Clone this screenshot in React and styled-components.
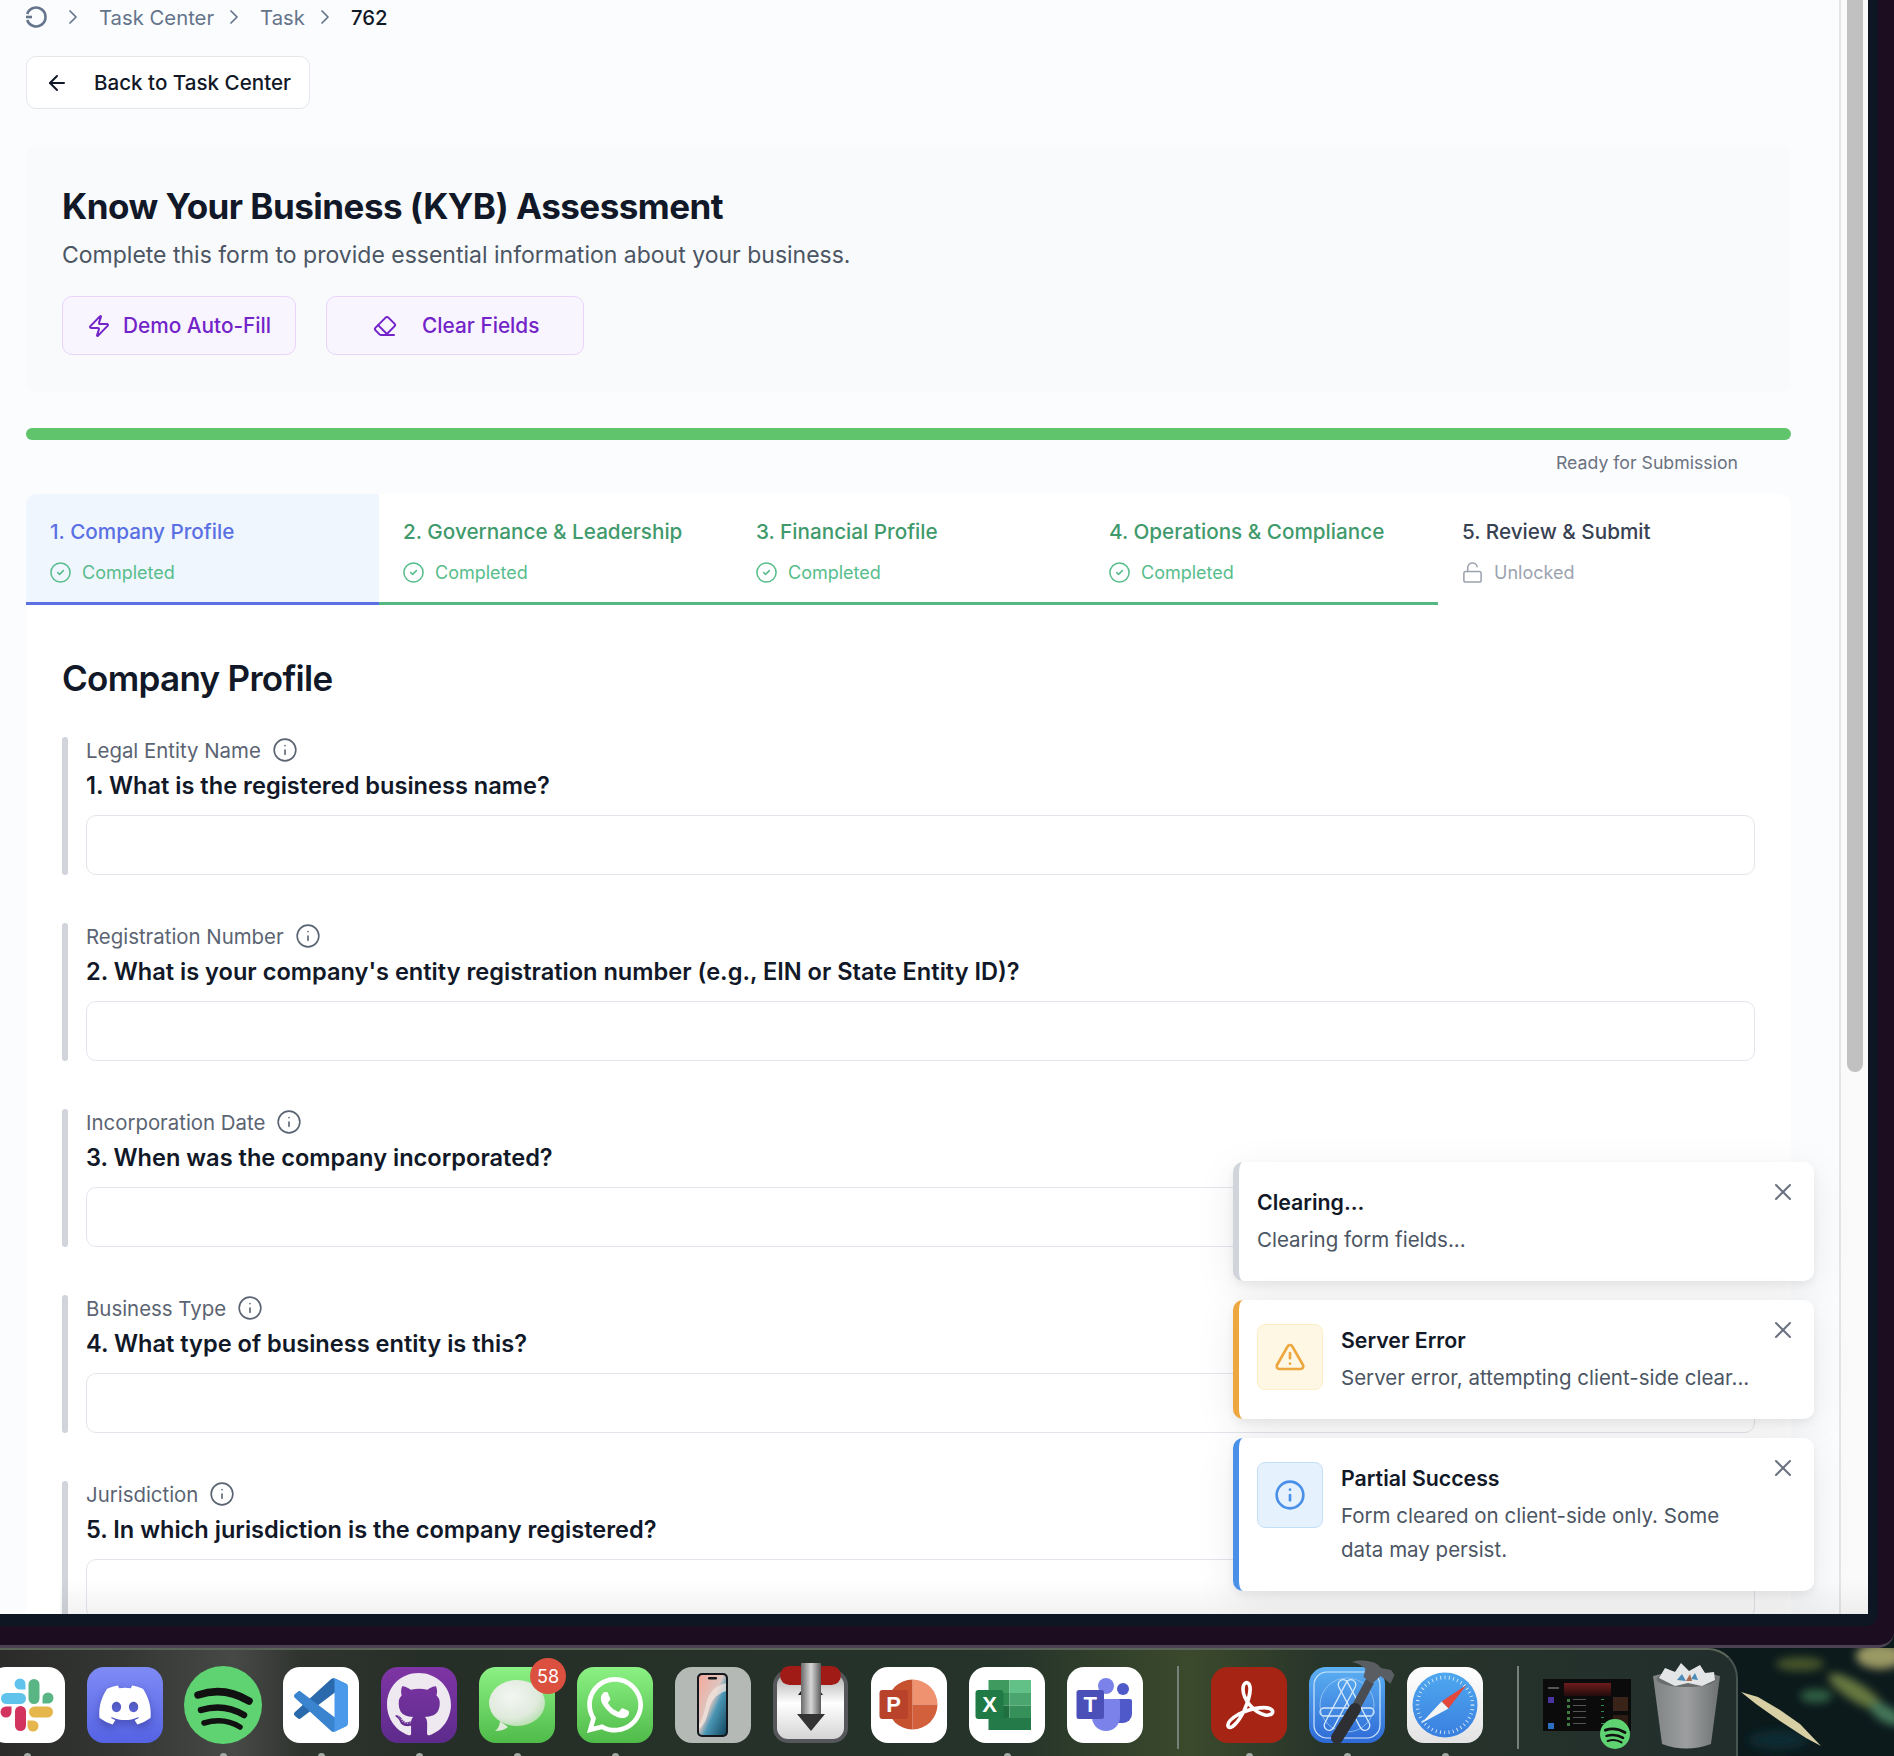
import React from 'react';
import styled, { createGlobalStyle } from 'styled-components';
import { ArrowLeft, ChevronRight, CircleCheck, Eraser, Info, LockOpen, TriangleAlert, X, Zap } from 'lucide-react';
import { FaDiscord, FaGithub, FaWhatsapp } from 'react-icons/fa';

const GlobalStyle = createGlobalStyle`
  html, body {
    margin: 0;
    padding: 0;
    background: #0c1a1c;
  }
  * {
    box-sizing: border-box;
  }
  body {
    font-family: 'Inter', 'Liberation Sans', sans-serif;
  }
`;

const Screen = styled.div`
  width: 1894px;
  height: 1756px;
  overflow: hidden;
  display: flex;
  flex-direction: column;
  background: #0c1a1c;
`;

/* window chrome */
const OuterFrame = styled.div`
  height: 1648px;
  flex-shrink: 0;
  background: #1c0e20;
  border-bottom: 3px solid #4c4152;
  border-bottom-right-radius: 16px;
  padding: 0 16px 19px 0;
`;

const InnerFrame = styled.div`
  height: 100%;
  background: #0f1623;
  border-bottom-right-radius: 12px;
  padding: 0 10px 12px 0;
`;

const Page = styled.div`
  position: relative;
  height: 100%;
  display: flex;
  overflow: hidden;
  background: #fbfcfe;
`;

const Main = styled.main`
  flex: 1;
  min-width: 0;
  padding: 0 48px 0 26px;
  overflow: hidden;
`;

const ScrollTrack = styled.div`
  width: 29px;
  flex-shrink: 0;
  background: #fafafa;
  border-left: 2px solid #e5e5e5;
  padding-left: 6px;
`;

const ScrollThumb = styled.div`
  width: 16px;
  height: 1072px;
  background: #c1c1c1;
  border-radius: 0 0 8px 8px;
`;

const BottomFade = styled.div`
  position: absolute;
  left: 60px;
  right: 0;
  bottom: 0;
  height: 34px;
  background: linear-gradient(to bottom, rgba(0, 0, 0, 0), rgba(0, 0, 0, 0.05));
  pointer-events: none;
`;

/* breadcrumb */
const Breadcrumb = styled.nav`
  height: 34px;
  display: flex;
  align-items: center;
  font-size: 20.3px;
  color: #64748b;
`;

const CrumbHome = styled.svg`
  width: 22px;
  height: 22px;
  margin: 0 6px 0 -1px;
  flex-shrink: 0;
`;

const CrumbSep = styled(ChevronRight)`
  margin: 0 14px 0 8px;
  flex-shrink: 0;
`;

const CrumbCurrent = styled.span`
  color: #111827;
  font-weight: 500;
`;

const BackButton = styled.button`
  display: flex;
  align-items: center;
  gap: 25px;
  width: 284px;
  height: 53px;
  margin-top: 22px;
  padding: 0 0 0 18px;
  background: #ffffff;
  border: 1px solid #e5e7eb;
  border-radius: 10px;
  font-family: inherit;
  font-size: 20.6px;
  font-weight: 500;
  color: #111827;
`;

/* header */
const HeaderPanel = styled.section`
  margin-top: 36px;
  height: 247px;
  padding: 36px;
  background: #f9fafc;
  border-radius: 10px;
`;

const Title = styled.h1`
  margin: 0;
  font-size: 35px;
  line-height: 50px;
  font-weight: 700;
  letter-spacing: -0.52px;
  color: #111827;
`;

const Subtitle = styled.p`
  margin: 7px 0 0;
  font-size: 23px;
  line-height: 34px;
  color: #4b5563;
`;

const ActionRow = styled.div`
  display: flex;
  gap: 30px;
  margin-top: 24px;
`;

const ActionButton = styled.button`
  display: flex;
  align-items: center;
  gap: ${(p) => p.$gap}px;
  height: 59px;
  padding: 0 ${(p) => p.$right}px 0 ${(p) => p.$left}px;
  background: #f8f5fe;
  border: 1px solid #e9d5fb;
  border-radius: 10px;
  font-family: inherit;
  font-size: 20.8px;
  font-weight: 500;
  color: #7324c9;
`;

/* progress */
const ProgressTrack = styled.div`
  margin-top: 36px;
  height: 12px;
  border-radius: 6px;
  background: #5fc46c;
`;

const ProgressLabel = styled.div`
  height: 54px;
  padding: 10px 53px 0 0;
  text-align: right;
  font-size: 17.7px;
  line-height: 26px;
  color: #6b7280;
`;

/* tabs */
const FormCard = styled.div`
  background: #ffffff;
  border-radius: 10px 10px 0 0;
`;

const TabRow = styled.div`
  display: grid;
  grid-template-columns: repeat(5, 1fr);
`;

const Tab = styled.div`
  height: 111px;
  padding: 24px 24px 0;
  background: ${(p) => (p.$active ? '#eff6fe' : 'transparent')};
  border-bottom: 3px solid ${(p) => (p.$active ? '#5a70e3' : p.$done ? '#54b884' : 'transparent')};
  border-top-left-radius: ${(p) => (p.$active ? '10px' : '0')};
`;

const TabLabel = styled.div`
  font-size: 20.7px;
  line-height: 28px;
  font-weight: 500;
  color: ${(p) => (p.$active ? '#5a70e3' : p.$done ? '#3f9a6c' : '#374151')};
`;

const TabStatus = styled.div`
  display: flex;
  align-items: center;
  gap: 10px;
  margin-top: 12px;
  margin-left: -1px;
  height: 28px;
  font-size: 18px;
  color: ${(p) => (p.$done ? '#57bd8c' : '#9ca3af')};
`;

/* questions */
const FormBody = styled.div`
  padding: 51px 36px 0;
`;

const SectionTitle = styled.h2`
  margin: 0 0 37px;
  font-size: 35px;
  line-height: 44px;
  font-weight: 600;
  letter-spacing: -0.7px;
  color: #111827;
`;

const QuestionBlock = styled.div`
  display: flex;
  gap: 18px;
  height: 138px;
  margin-bottom: 48px;
`;

const QuestionBar = styled.div`
  width: 6px;
  flex-shrink: 0;
  background: #d1d5db;
  border-radius: 3px;
`;

const QuestionBody = styled.div`
  flex: 1;
  min-width: 0;
`;

const FieldLabel = styled.div`
  display: flex;
  align-items: center;
  gap: 11px;
  height: 26px;
  font-size: 20.4px;
  color: #5b6472;
`;

const QuestionText = styled.div`
  margin-top: 6px;
  font-size: 23.6px;
  line-height: 34px;
  font-weight: 600;
  color: #111827;
`;

const TextField = styled.div`
  height: 60px;
  margin-top: 12px;
  background: #ffffff;
  border: 1px solid #e2e6ec;
  border-radius: 10px;
`;

/* toasts */
const ToastStack = styled.div`
  position: absolute;
  right: 54px;
  bottom: 23px;
  width: 581px;
  display: flex;
  flex-direction: column;
  gap: 19px;
`;

const ToastCard = styled.div`
  position: relative;
  display: flex;
  gap: 18px;
  padding: 24px 54px 24px 18px;
  background: #ffffff;
  border-left: 6px solid ${(p) => p.$accent};
  border-radius: 10px;
  box-shadow: 0 4px 8px rgba(0, 0, 0, 0.06), 0 10px 40px rgba(0, 0, 0, 0.08);
`;

const ToastIconBox = styled.div`
  width: 66px;
  height: 66px;
  flex-shrink: 0;
  display: flex;
  align-items: center;
  justify-content: center;
  background: ${(p) => p.$bg};
  border: 1px solid ${(p) => p.$border};
  border-radius: 8px;
  color: ${(p) => p.$color};
`;

const ToastTitle = styled.div`
  font-size: 21.3px;
  line-height: 32px;
  font-weight: 600;
  color: #111827;
`;

const ToastMessage = styled.div`
  margin-top: 5px;
  font-size: 20.5px;
  line-height: 34px;
  color: #4b5563;
`;

const ToastClose = styled(X)`
  position: absolute;
  top: 16px;
  right: 17px;
  color: #6b7280;
`;

/* dock */
const DesktopRow = styled.div`
  flex: 1;
  display: flex;
  min-height: 0;
`;

const Dock = styled.div`
  width: 1738px;
  flex-shrink: 0;
  display: flex;
  gap: 22px;
  padding-top: 17px;
  overflow: hidden;
  border-top: 2px solid #5a6458;
  border-right: 2px solid #47544f;
  border-top-right-radius: 30px;
  background: linear-gradient(
    to right,
    #2b2c2a 0,
    #343633 120px,
    #474947 235px,
    #30342f 300px,
    #262f27 420px,
    #25332a 1000px,
    #3b4a2c 1190px,
    #28352a 1320px,
    #222e2c 1738px
  );
`;

const DockItem = styled.div`
  width: ${(p) => p.$width || 76}px;
  flex-shrink: 0;
  display: flex;
  flex-direction: column;
  align-items: center;
  gap: 10px;
  margin-left: ${(p) => p.$offset || 0}px;
`;

const DockTile = styled.div`
  position: relative;
  width: ${(p) => p.$size || 76}px;
  height: 76px;
  flex-shrink: 0;
  display: flex;
  align-items: center;
  justify-content: center;
  color: ${(p) => p.$color || '#ffffff'};
  background: ${(p) => p.$bg || 'transparent'};
  border-radius: ${(p) => p.$radius ?? 17}px;
  svg {
    flex-shrink: 0;
    overflow: visible;
  }
`;

const DiscordGlyph = styled(FaDiscord)`
  filter: drop-shadow(0 4px 4px rgba(40, 40, 120, 0.45));
`;

const DockDot = styled.div`
  width: 7px;
  height: 7px;
  flex-shrink: 0;
  border-radius: 50%;
  background: #a3aaa5;
`;

const DockSeparator = styled.div`
  width: 2px;
  height: 83px;
  flex-shrink: 0;
  margin: -1px ${(p) => p.$right}px 0 12px;
  background: #76807a;
`;

const MessageBadge = styled.span`
  position: absolute;
  top: -9px;
  right: -11px;
  width: 36px;
  height: 36px;
  display: flex;
  align-items: center;
  justify-content: center;
  border-radius: 50%;
  background: #dc5040;
  color: #ffffff;
  font-size: 18px;
`;

const ThumbBadge = styled.div`
  position: absolute;
  right: 1px;
  bottom: -10px;
`;

const Wallpaper = styled.svg`
  flex: 1;
  height: 100%;
  display: block;
`;

const SpotifyGlyph = ({ size }) => (
  <svg width={size} height={size} viewBox="0 0 78 78">
    <circle cx="39" cy="39" r="39" fill="#5fd372" />
    <g fill="none" stroke="#111" strokeLinecap="round">
      <path d="M14 29 Q40 20 65 35" strokeWidth="7.5" />
      <path d="M17 44 Q40 37 60 49" strokeWidth="6.5" />
      <path d="M20 57 Q40 51 56 61" strokeWidth="5.5" />
    </g>
  </svg>
);

const SlackIcon = () => (
  <svg width="76" height="76" viewBox="0 0 76 76">
    <g fill="none" strokeLinecap="round" strokeWidth="11">
      <path d="M17.5 31.5H31.5" stroke="#5fc3ec" />
      <path d="M45 17.5V31.5" stroke="#5ab585" />
      <path d="M45.5 45H58.5" stroke="#e5b64c" />
      <path d="M31.5 44.5V58.5" stroke="#d3345f" />
    </g>
    <path d="M31 11.5a5.5 5.5 0 0 1 5.5 5.5v5.5H31a5.5 5.5 0 0 1 0-11z" fill="#5fc3ec" />
    <path d="M64.5 31a5.5 5.5 0 0 1-5.5 5.5h-5.5V31a5.5 5.5 0 0 1 11 0z" fill="#5ab585" />
    <path d="M44 64.5a5.5 5.5 0 0 1-5.5-5.5v-5.5H44a5.5 5.5 0 0 1 0 11z" fill="#e5b64c" />
    <path d="M11.5 45a5.5 5.5 0 0 1 5.5-5.5h5.5V45a5.5 5.5 0 0 1-11 0z" fill="#d3345f" />
  </svg>
);

const VsCodeIcon = () => (
  <svg width="54" height="54" viewBox="0 0 100 100">
    <path d="M96.46 10.78L75.85.86C73.47-.29 70.63.2 68.76 2.07L1.36 63.58c-1.81 1.65-1.81 4.51.01 6.16l5.5 5.01c1.49 1.35 3.73 1.45 5.33.24L93.4 13.43c2.72-2.06 6.6-.12 6.6 3.29v-.24c0-2.4-1.38-4.6-3.54-5.7z" fill="#2a69ab" />
    <path d="M96.46 89.22L75.85 99.14c-2.38 1.15-5.22.66-7.09-1.21L1.36 36.42c-1.81-1.65-1.81-4.51.01-6.16l5.5-5.01c1.49-1.35 3.73-1.45 5.33-.24L93.4 86.57c2.72 2.06 6.6.12 6.6-3.29v.24c0 2.4-1.38 4.6-3.54 5.7z" fill="#3a84cf" />
    <path d="M75.85 99.13c-2.38 1.15-5.22.66-7.09-1.21C71.07 100.23 75 98.6 75 95.33V4.67c0-3.27-3.93-4.9-6.24-2.59 1.87-1.87 4.71-2.36 7.09-1.21l20.6 9.91C98.62 11.82 100 14.01 100 16.41v67.18c0 2.4-1.38 4.6-3.54 5.64z" fill="#4a99ea" />
  </svg>
);

const BubbleIcon = () => (
  <svg width="76" height="76" viewBox="0 0 76 76">
    <defs>
      <radialGradient id="bubbleFill" cx="0.4" cy="0.35" r="0.75">
        <stop offset="0" stopColor="#f4f6f3" />
        <stop offset="0.65" stopColor="#dfeadc" />
        <stop offset="1" stopColor="#a8dba0" />
      </radialGradient>
    </defs>
    <path d="M21 54c0 4-2 8-5 10 5 0 9-1 13-4z" fill="#dfeadc" />
    <ellipse cx="38" cy="36" rx="28" ry="23" fill="url(#bubbleFill)" />
  </svg>
);

const PhoneIcon = () => (
  <svg width="76" height="76" viewBox="0 0 76 76">
    <defs>
      <linearGradient id="phoneScreen" x1="0" y1="0" x2="1" y2="1">
        <stop offset="0" stopColor="#f5a99c" />
        <stop offset="0.45" stopColor="#dcc6c0" />
        <stop offset="0.6" stopColor="#4a96b5" />
        <stop offset="1" stopColor="#12475f" />
      </linearGradient>
    </defs>
    <rect x="22" y="6" width="31" height="64" rx="5" fill="#14181c" />
    <rect x="24" y="8" width="27" height="60" rx="3.5" fill="url(#phoneScreen)" />
    <path d="M24 62c6-4 8-12 10-20 2-8 6-14 17-18v-8c-13 3-18 12-20 21-2 9-4 17-7 20z" fill="#f1e4de" opacity="0.75" />
    <rect x="33" y="10" width="9" height="2.5" rx="1.2" fill="#14181c" />
  </svg>
);

const TransmissionIcon = () => (
  <svg width="76" height="76" viewBox="0 0 76 76">
    <defs>
      <linearGradient id="tmBody" x1="0" y1="0" x2="0" y2="1">
        <stop offset="0" stopColor="#a8a8a8" />
        <stop offset="0.45" stopColor="#ffffff" />
        <stop offset="1" stopColor="#d2d2d2" />
      </linearGradient>
      <linearGradient id="tmBar" x1="0" y1="0" x2="1" y2="0">
        <stop offset="0" stopColor="#6a6a6a" />
        <stop offset="0.5" stopColor="#d8d8d8" />
        <stop offset="1" stopColor="#5a5a5a" />
      </linearGradient>
    </defs>
    <rect x="2" y="5" width="71" height="69" rx="13" fill="url(#tmBody)" stroke="#55575a" strokeWidth="4" />
    <path d="M25 28l6-8h13l6 8z" fill="#1d1d1d" />
    <path d="M24 47h7V18h14v29h7L38 64z" fill="#333" />
    <rect x="7" y="-1" width="61" height="19" rx="9.5" fill="#a01a16" />
    <rect x="28" y="-4" width="20" height="51" fill="url(#tmBar)" />
  </svg>
);

const PowerPointIcon = () => (
  <svg width="76" height="76" viewBox="0 0 76 76">
    <path d="M41.5 37.5V12.5a25 25 0 0 1 25 25z" fill="#ee9270" />
    <path d="M66.5 37.5a25 25 0 0 1-25 25v-25z" fill="#d2603c" />
    <path d="M41.5 12.5v50a25 25 0 0 1 0-50z" fill="#c5512f" />
    <rect x="8.5" y="23" width="28.5" height="29" rx="3" fill="#b8432a" />
    <text x="22.7" y="45" textAnchor="middle" fontFamily="Liberation Sans" fontSize="22" fontWeight="700" fill="#fff">P</text>
  </svg>
);

const ExcelIcon = () => (
  <svg width="76" height="76" viewBox="0 0 76 76">
    <rect x="19.5" y="13" width="21" height="13" fill="#3f9a5f" />
    <rect x="40.5" y="13" width="21.5" height="13" fill="#62c186" />
    <rect x="19.5" y="26" width="21" height="12.5" fill="#2f8a52" />
    <rect x="40.5" y="26" width="21.5" height="12.5" fill="#4aa56e" />
    <rect x="19.5" y="38.5" width="21" height="12.5" fill="#20703f" />
    <rect x="40.5" y="38.5" width="21.5" height="12.5" fill="#35905a" />
    <rect x="19.5" y="51" width="42.5" height="12" fill="#247a48" />
    <rect x="6.5" y="23" width="28" height="29" rx="3" fill="#1f7a45" />
    <text x="20.5" y="45" textAnchor="middle" fontFamily="Liberation Sans" fontSize="22" fontWeight="700" fill="#fff">X</text>
  </svg>
);

const TeamsIcon = () => (
  <svg width="76" height="76" viewBox="0 0 76 76">
    <circle cx="56" cy="22" r="6" fill="#5059c9" />
    <path d="M48 32h15a2 2 0 0 1 2 2v13a9 9 0 0 1-9 9h-8z" fill="#5059c9" />
    <circle cx="39" cy="19" r="8" fill="#7b83eb" />
    <path d="M25 32h26a2 2 0 0 1 2 2v16a14 14 0 0 1-28 0z" fill="#7b83eb" />
    <rect x="9.5" y="23" width="27.5" height="29" rx="2.5" fill="#4a50b8" />
    <text x="23.2" y="45" textAnchor="middle" fontFamily="Liberation Sans" fontSize="22" fontWeight="700" fill="#fff">T</text>
  </svg>
);

const AcrobatIcon = () => (
  <svg width="76" height="76" viewBox="0 0 76 76">
    <path
      d="M17 59C19 64 27 56 33 44C37 35 41 22 38 17C36 14 32 16 32 22C32 32 42 45 54 48C60 49 63 46 61 43C58 39 42 40 28 47C21 51 16 55 17 59Z"
      fill="none"
      stroke="#fff"
      strokeWidth="3.6"
      strokeLinejoin="round"
    />
  </svg>
);

const XcodeIcon = () => (
  <svg width="76" height="76" viewBox="0 0 76 76">
    <rect x="5" y="5" width="66" height="66" rx="13" fill="none" stroke="#cfe6fb" strokeWidth="1.2" />
    <circle cx="38" cy="38" r="27" fill="none" stroke="#9cc9f3" strokeWidth="0.8" />
    <g fill="none" stroke="#d6eafb" strokeWidth="1.3">
      <rect x="-5" y="-28" width="10" height="56" rx="5" transform="translate(31 38) rotate(28)" />
      <rect x="-5" y="-28" width="10" height="56" rx="5" transform="translate(45 38) rotate(-28)" />
      <rect x="11" y="41" width="54" height="8" rx="4" />
    </g>
    <line x1="46" y1="42" x2="61" y2="14" stroke="#4a4d52" strokeWidth="9" />
    <line x1="28" y1="71" x2="46" y2="42" stroke="#2d2f33" strokeWidth="12" strokeLinecap="round" />
    <path d="M43-5C52-8 62-6 68-3L72 1L82 3L85.5 8L81.5 16.7L71.5 9L63 16.7L54.5 10L56.5 1.7C52-2 48-4 43-5z" fill="#5a5d62" />
  </svg>
);

const SafariIcon = () => (
  <svg width="76" height="76" viewBox="0 0 76 76">
    <defs>
      <linearGradient id="safariDial" x1="0" y1="0" x2="0" y2="1">
        <stop offset="0" stopColor="#4fa8ef" />
        <stop offset="1" stopColor="#3a7fe0" />
      </linearGradient>
    </defs>
    <circle cx="38" cy="38" r="32.5" fill="url(#safariDial)" />
    <circle cx="38" cy="38" r="27.5" fill="none" stroke="#e6f1fb" strokeWidth="3.6" strokeDasharray="0.8 3.5" />
    <path d="M59.5 18L34.5 34.5L41.5 41.5z" fill="#e2483c" />
    <path d="M14 56.5L34.5 34.5L41.5 41.5z" fill="#f4f4f4" />
  </svg>
);

const thumbRows = [20, 26, 32, 38, 44];

const WindowThumb = () => (
  <svg width="88" height="52" viewBox="0 0 88 52">
    <defs>
      <linearGradient id="thumbHead" x1="0" y1="0" x2="0" y2="1">
        <stop offset="0" stopColor="#6e1c1c" />
        <stop offset="1" stopColor="#240c0c" />
      </linearGradient>
    </defs>
    <rect width="88" height="52" fill="#0b0b0b" />
    <rect x="21" y="4" width="47" height="13" fill="url(#thumbHead)" />
    <rect x="5" y="8" width="11" height="2" fill="#555" />
    <rect x="5" y="18" width="6" height="6" fill="#4a35a0" />
    <rect x="5" y="44" width="6" height="6" fill="#2a6fc4" />
    {thumbRows.map((y) => (
      <g key={y}>
        <rect x="24" y={y} width="3" height="3" fill="#3f7a3f" />
        <rect x="30" y={y} width="13" height="1" fill="#555" />
        <rect x="58" y={y} width="3" height="1" fill="#2f8a4f" />
      </g>
    ))}
    <rect x="70" y="18" width="15" height="14" fill="#3a241a" />
    <rect x="70" y="36" width="15" height="10" fill="#2d1c14" />
  </svg>
);

const TrashIcon = () => (
  <svg width="67" height="87" viewBox="0 0 67 87">
    <defs>
      <linearGradient id="trashCup" x1="0" y1="0" x2="1" y2="0">
        <stop offset="0" stopColor="#808384" />
        <stop offset="0.5" stopColor="#9c9e9f" />
        <stop offset="1" stopColor="#6e7172" />
      </linearGradient>
    </defs>
    <path d="M0 14Q33 6 67 14L58 82Q33 91 9 82z" fill="url(#trashCup)" />
    <ellipse cx="33.5" cy="17" rx="30" ry="8" fill="#6a6d6e" />
    <path d="M6 16l6-10 10 4 6-9 8 8 11-6 5 8 9-1 1 8-13 6-14-3-13 3z" fill="#e4e5e6" />
    <path d="M24 18l5-6 4 7zM38 17l4-6 3 7z" fill="#4a8bb8" />
    <path d="M33 19l4-7 2 7z" fill="#a8694a" />
  </svg>
);

const WallpaperArt = () => (
  <Wallpaper viewBox="0 0 156 108" preserveAspectRatio="none">
    <defs>
      <filter id="wpBlur"><feGaussianBlur stdDeviation="4" /></filter>
      <filter id="wpSoft"><feGaussianBlur stdDeviation="0.7" /></filter>
    </defs>
    <rect width="156" height="108" fill="#0c1a1c" />
    <g filter="url(#wpBlur)">
      <ellipse cx="62" cy="16" rx="24" ry="7" fill="#46552c" />
      <ellipse cx="142" cy="8" rx="24" ry="13" fill="#9a9864" />
      <ellipse cx="118" cy="44" rx="32" ry="9" fill="#66783f" transform="rotate(32 118 44)" />
      <ellipse cx="78" cy="48" rx="16" ry="7" fill="#2f5f42" />
      <ellipse cx="148" cy="66" rx="18" ry="8" fill="#44785a" transform="rotate(30 148 66)" />
      <ellipse cx="40" cy="92" rx="30" ry="10" fill="#0e2c30" />
    </g>
    <path d="M3 44 L20 49 L42 62 L62 76 L83 98 L68 90 L42 73 L18 56 Z" fill="#d8d0a4" filter="url(#wpSoft)" />
  </Wallpaper>
);

const steps = [
  { label: '1. Company Profile', status: 'Completed', done: true, active: true },
  { label: '2. Governance & Leadership', status: 'Completed', done: true },
  { label: '3. Financial Profile', status: 'Completed', done: true },
  { label: '4. Operations & Compliance', status: 'Completed', done: true },
  { label: '5. Review & Submit', status: 'Unlocked', done: false },
];

const questions = [
  { label: 'Legal Entity Name', text: '1. What is the registered business name?' },
  { label: 'Registration Number', text: "2. What is your company's entity registration number (e.g., EIN or State Entity ID)?" },
  { label: 'Incorporation Date', text: '3. When was the company incorporated?' },
  { label: 'Business Type', text: '4. What type of business entity is this?' },
  { label: 'Jurisdiction', text: '5. In which jurisdiction is the company registered?' },
];

const App = () => (
  <>
    <GlobalStyle />
    <Screen>
      <OuterFrame>
        <InnerFrame>
          <Page>
            <Main>
              <Breadcrumb>
                <CrumbHome viewBox="0 0 22 22" fill="none" stroke="#64748b" strokeWidth="2.6">
                  <path d="M2.2 8A9.4 9.4 0 1 1 2.2 14" />
                  <path d="M1 11H7" />
                </CrumbHome>
                <CrumbSep size={24} strokeWidth={1.75} />
                <span>Task Center</span>
                <CrumbSep size={24} strokeWidth={1.75} />
                <span>Task</span>
                <CrumbSep size={24} strokeWidth={1.75} />
                <CrumbCurrent>762</CrumbCurrent>
              </Breadcrumb>

              <BackButton>
                <ArrowLeft size={24} strokeWidth={2} />
                Back to Task Center
              </BackButton>

              <HeaderPanel>
                <Title>Know Your Business (KYB) Assessment</Title>
                <Subtitle>Complete this form to provide essential information about your business.</Subtitle>
                <ActionRow>
                  <ActionButton $gap={12} $left={24} $right={24}>
                    <Zap size={24} strokeWidth={2} />
                    Demo Auto-Fill
                  </ActionButton>
                  <ActionButton $gap={25} $left={46} $right={44}>
                    <Eraser size={24} strokeWidth={2} />
                    Clear Fields
                  </ActionButton>
                </ActionRow>
              </HeaderPanel>

              <ProgressTrack />
              <ProgressLabel>Ready for Submission</ProgressLabel>

              <FormCard>
                <TabRow>
                  {steps.map((step) => (
                    <Tab key={step.label} $active={step.active} $done={step.done}>
                      <TabLabel $active={step.active} $done={step.done}>{step.label}</TabLabel>
                      <TabStatus $done={step.done}>
                        {step.done ? <CircleCheck size={23} strokeWidth={1.6} /> : <LockOpen size={23} strokeWidth={1.6} />}
                        {step.status}
                      </TabStatus>
                    </Tab>
                  ))}
                </TabRow>

                <FormBody>
                  <SectionTitle>Company Profile</SectionTitle>
                  {questions.map((q) => (
                    <QuestionBlock key={q.label}>
                      <QuestionBar />
                      <QuestionBody>
                        <FieldLabel>
                          {q.label}
                          <Info size={26} strokeWidth={1.5} />
                        </FieldLabel>
                        <QuestionText>{q.text}</QuestionText>
                        <TextField />
                      </QuestionBody>
                    </QuestionBlock>
                  ))}
                </FormBody>
              </FormCard>
            </Main>

            <ScrollTrack>
              <ScrollThumb />
            </ScrollTrack>

            <BottomFade />

            <ToastStack>
              <ToastCard $accent="#d1d5db">
                <div>
                  <ToastTitle>Clearing...</ToastTitle>
                  <ToastMessage>Clearing form fields...</ToastMessage>
                </div>
                <ToastClose size={28} strokeWidth={1.75} />
              </ToastCard>
              <ToastCard $accent="#eea63f">
                <ToastIconBox $bg="#fef7e3" $border="#fdeec6" $color="#eea63f">
                  <TriangleAlert size={32} strokeWidth={2} />
                </ToastIconBox>
                <div>
                  <ToastTitle>Server Error</ToastTitle>
                  <ToastMessage>Server error, attempting client-side clear...</ToastMessage>
                </div>
                <ToastClose size={28} strokeWidth={1.75} />
              </ToastCard>
              <ToastCard $accent="#4a90e8">
                <ToastIconBox $bg="#e5f1fd" $border="#c4dff8" $color="#4a90e8">
                  <Info size={32} strokeWidth={2} />
                </ToastIconBox>
                <div>
                  <ToastTitle>Partial Success</ToastTitle>
                  <ToastMessage>Form cleared on client-side only. Some data may persist.</ToastMessage>
                </div>
                <ToastClose size={28} strokeWidth={1.75} />
              </ToastCard>
            </ToastStack>
          </Page>
        </InnerFrame>
      </OuterFrame>

      <DesktopRow>
        <Dock>
          <DockItem $offset={-11}>
            <DockTile $bg="#ffffff"><SlackIcon /></DockTile>
            <DockDot />
          </DockItem>
          <DockItem>
            <DockTile $bg="linear-gradient(#7f8bf5, #5563e4)"><DiscordGlyph size={56} /></DockTile>
          </DockItem>
          <DockItem>
            <DockTile $radius={0}><SpotifyGlyph size={78} /></DockTile>
            <DockDot />
          </DockItem>
          <DockItem>
            <DockTile $bg="#ffffff"><VsCodeIcon /></DockTile>
            <DockDot />
          </DockItem>
          <DockItem>
            <DockTile $bg="linear-gradient(#7f35a5, #5d2b8c)" $color="#eee8f1"><FaGithub size={66} /></DockTile>
            <DockDot />
          </DockItem>
          <DockItem>
            <DockTile $bg="linear-gradient(#8cf184, #4fbb49)">
              <BubbleIcon />
              <MessageBadge>58</MessageBadge>
            </DockTile>
            <DockDot />
          </DockItem>
          <DockItem>
            <DockTile $bg="linear-gradient(#8cf184, #4fbb49)"><FaWhatsapp size={64} /></DockTile>
            <DockDot />
          </DockItem>
          <DockItem>
            <DockTile $bg="#b5b9b6"><PhoneIcon /></DockTile>
          </DockItem>
          <DockItem>
            <DockTile><TransmissionIcon /></DockTile>
          </DockItem>
          <DockItem>
            <DockTile $bg="#ffffff"><PowerPointIcon /></DockTile>
          </DockItem>
          <DockItem>
            <DockTile $bg="#ffffff"><ExcelIcon /></DockTile>
            <DockDot />
          </DockItem>
          <DockItem>
            <DockTile $bg="#ffffff"><TeamsIcon /></DockTile>
          </DockItem>
          <DockSeparator $right={10} />
          <DockItem>
            <DockTile $bg="#a62414"><AcrobatIcon /></DockTile>
            <DockDot />
          </DockItem>
          <DockItem>
            <DockTile $bg="linear-gradient(#5cb0f2, #2e6ad6)"><XcodeIcon /></DockTile>
            <DockDot />
          </DockItem>
          <DockItem>
            <DockTile $bg="linear-gradient(#ffffff, #e3e3e3)"><SafariIcon /></DockTile>
            <DockDot />
          </DockItem>
          <DockSeparator $right={2} />
          <DockItem $width={88}>
            <DockTile $size={88} $radius={0}>
              <WindowThumb />
              <ThumbBadge><SpotifyGlyph size={30} /></ThumbBadge>
            </DockTile>
          </DockItem>
          <DockItem $width={67}>
            <DockTile $size={67} $radius={0}><TrashIcon /></DockTile>
          </DockItem>
        </Dock>
        <WallpaperArt />
      </DesktopRow>
    </Screen>
  </>
);

export default App;
